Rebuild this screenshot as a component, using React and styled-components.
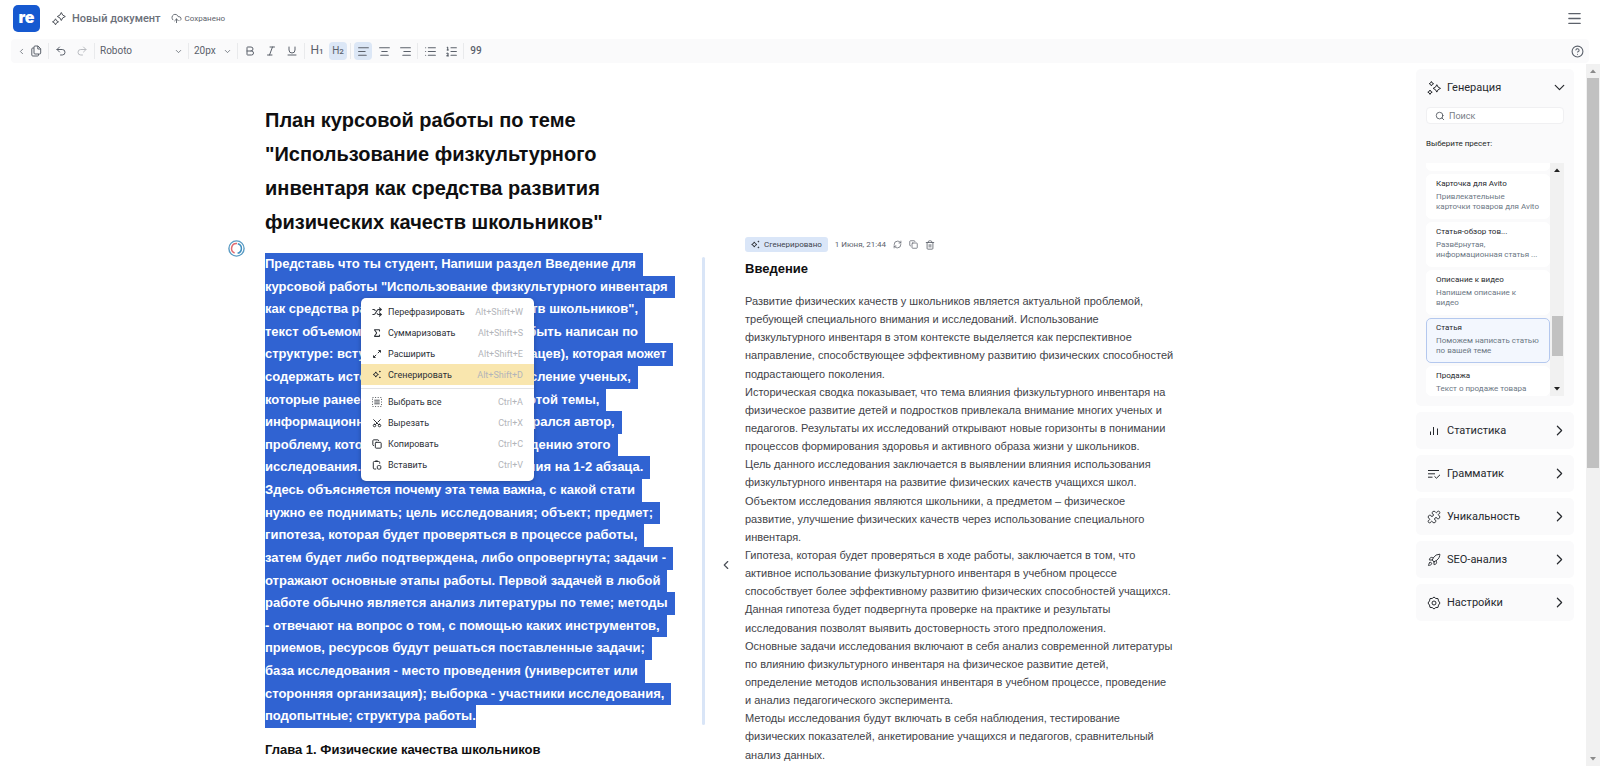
import React from 'react';
import styled, { createGlobalStyle, css } from 'styled-components';
import {
  AlignCenter,
  AlignLeft,
  AlignRight,
  Bold,
  ChevronDown,
  ChevronLeft,
  ChevronRight,
  CircleHelp,
  CloudUpload,
  Copy,
  Italic,
  List,
  ListOrdered,
  Menu,
  Puzzle,
  Redo2,
  RefreshCw,
  Rocket,
  Search,
  Shuffle,
  Scissors,
  Sigma,
  Trash2,
  Underline,
  Undo2,
} from 'lucide-react';

const GlobalStyle = createGlobalStyle`
* {
  box-sizing: border-box;
}
body {
  margin: 0;
  background: #fff;
  color: #1d1f24;
  font-family: Roboto, 'Liberation Sans', sans-serif;
}
button, input, select {
  font: inherit;
  color: inherit;
}
h1, h2, p {
  margin: 0;
}
`;

const Page = styled.div`
  display: flex;
  flex-direction: column;
  height: 100vh;
  overflow: hidden;
`;

const PlainButton = styled.button`
  display: flex;
  align-items: center;
  justify-content: center;
  padding: 0;
  border: 0;
  background: none;
  cursor: pointer;
`;

/* header */

const Header = styled.header`
  display: flex;
  align-items: center;
  flex: none;
  height: 39px;
  padding: 0 17px 2px 13px;
  color: #5d626b;
`;
const Logo = styled.a`
  display: flex;
  align-items: center;
  justify-content: center;
  width: 27px;
  height: 27px;
  margin-right: 12px;
  padding-bottom: 3px;
  border-radius: 5px;
  background: #1659d0;
  color: #fff;
  font: 900 16px/16px Inter, sans-serif;
  text-decoration: none;
`;
const DocTitle = styled.span`
  margin: 0 10px 0 6px;
  font-size: 11px;
  line-height: 16px;
  font-weight: 500;
  color: #6b7079;
`;
const Saved = styled.span`
  display: flex;
  align-items: center;
  gap: 3px;
  font-size: 8px;
  line-height: 12px;
`;
const MenuButton = styled(PlainButton)`
  margin-left: auto;
`;

/* toolbar */

const Toolbar = styled.div`
  display: flex;
  align-items: center;
  flex: none;
  height: 24px;
  margin: 0 11px 1px;
  padding: 0 5px;
  border-radius: 4px;
  background: #fafafb;
  color: #5b616b;
`;
const Tool = styled(PlainButton)`
  width: ${({ $narrow }) => ($narrow ? '11px' : '18px')};
  height: 18px;
  margin-right: ${({ $narrow }) => ($narrow ? '0' : '3px')};
  border-radius: 4px;
  background: ${({ $active }) => ($active ? '#dce7f6' : 'none')};
  opacity: ${({ disabled }) => (disabled ? 0.4 : 1)};
`;
const Heading = styled.span`
  font-size: ${({ $small }) => ($small ? '10px' : '12px')};
  line-height: 14px;

  small {
    font-size: 8px;
    font-weight: 500;
  }
`;
const Quote = styled.span`
  font-size: 10px;
  line-height: 14px;
  font-weight: 500;
`;
const Divider = styled.span`
  width: 1px;
  height: 16px;
  margin-right: 3px;
  background: #e9eaec;
`;
const SelectBox = styled.label`
  display: flex;
  align-items: center;
  width: ${({ $wide }) => ($wide ? '90px' : '45px')};
  padding: 0 5px 0 2px;

  select {
    flex: 1;
    min-width: 0;
    padding: 0;
    border: 0;
    background: none;
    appearance: none;
    font-size: 10px;
    line-height: 14px;
  }
`;
const HelpButton = styled(PlainButton)`
  margin-left: auto;
`;

/* body */

const Body = styled.div`
  display: flex;
  flex: 1;
  min-height: 0;
`;
const Workspace = styled.main`
  display: flex;
  justify-content: center;
  flex: 1;
  min-width: 0;
  overflow: hidden;
`;
const Sheet = styled.article`
  flex: none;
  width: 960px;
  padding-top: 39px;
`;
const Title = styled.h1`
  width: 400px;
  margin-left: 37px;
  font: bold 20px/34px 'Liberation Sans', Arial, sans-serif;
  color: #0f0f10;
`;
const Section = styled.section`
  display: flex;
`;
const Gutter = styled.div`
  flex: none;
  width: 37px;
  padding-top: 1px;
`;
const Source = styled.div`
  flex: none;
  width: 440px;
  padding-top: 14px;
`;
const SourceRow = styled.div`
  position: relative;
  display: flex;
  justify-content: space-between;
`;
const Rule = styled.div`
  flex: none;
  width: 3px;
  height: 468px;
  margin-top: 4px;
  border-radius: 2px;
  background: #d9e5f7;
`;
const Selected = styled.p`
  font: bold 13px/1.74 'Liberation Sans', Arial, sans-serif;
  color: #fff;
`;
const Line = styled.span`
  display: block;
  width: fit-content;
  padding-right: 7px;
  background: #3063d2;
  white-space: nowrap;

  &:last-child {
    padding-right: 0;
  }
`;
const Chapter = styled.h2`
  padding-top: 10px;
  font: bold 13px/24px 'Liberation Sans', Arial, sans-serif;
  color: #0f0f10;
`;
const Collapse = styled(PlainButton)`
  align-self: flex-start;
  width: 16px;
  height: 16px;
  margin: 318px 11px 0 13px;
  color: #4b5058;
`;
const Result = styled.div`
  flex: 1;
  min-width: 0;
`;
const ResultBar = styled.div`
  display: flex;
  align-items: center;
  gap: 7px;
  height: 11px;
  font-size: 8px;
  line-height: 11px;
  color: #5d626b;
`;
const Badge = styled.span`
  display: flex;
  align-items: center;
  gap: 4px;
  padding: 2px 6px;
  border-radius: 3px;
  background: #dae6f8;
  color: #3d434d;
`;
const ResultTitle = styled.h2`
  padding: 7px 0 11px;
  font: bold 13px/24px 'Liberation Sans', Arial, sans-serif;
  color: #0f0f10;
`;
const ResultText = styled.p`
  font: 11px/1.65 'Liberation Sans', Arial, sans-serif;
  color: #3f4349;
  white-space: pre-line;
`;

/* context menu */

const ContextMenu = styled.div`
  position: absolute;
  top: 45px;
  left: 96px;
  width: 173px;
  padding: 3px 0 6px;
  border-radius: 5px;
  background: #fff;
  box-shadow: 0 1px 4px rgba(20, 30, 60, 0.35);
`;
const MenuItem = styled.button`
  display: flex;
  align-items: center;
  gap: 6px;
  width: 100%;
  height: 21px;
  padding: 0 11px;
  border: 0;
  background: ${({ $active }) => ($active ? '#f9e6ae' : 'none')};
  font-size: 9px;
  line-height: 14px;
  color: #2c3036;
  white-space: nowrap;
  cursor: pointer;

  svg {
    width: 10px;
  }
  kbd {
    margin-left: auto;
    font: 9px/14px Roboto, sans-serif;
    color: #b3b5ba;
  }
`;
const MenuRule = styled.div`
  height: 1px;
  margin: 3px 0 2px;
  background: #e1e2e5;
`;

/* sidebar */

const Sidebar = styled.aside`
  flex: none;
  width: 158px;
  margin-right: 12px;
  padding-top: 5px;
`;
const Panel = styled.div`
  margin-bottom: 6px;
  border-radius: 5px;
  background: #fafafb;
`;
const PanelHead = styled.button`
  display: flex;
  align-items: center;
  gap: 6px;
  width: 100%;
  height: 37px;
  padding: 0 6px 0 11px;
  border: 0;
  background: none;
  font-size: 11px;
  line-height: 16px;
  color: #26292e;
  text-align: left;
  cursor: pointer;

  span {
    flex: 1;
  }
`;
const PanelBody = styled.div`
  padding: 1px 10px 10px;
`;
const SearchBox = styled.label`
  display: flex;
  align-items: center;
  gap: 4px;
  height: 17px;
  padding: 0 8px;
  border: 1px solid #f0f0f2;
  border-radius: 4px;
  background: #fff;
  color: #4b5058;

  input {
    flex: 1;
    min-width: 0;
    padding: 0;
    border: 0;
    outline: 0;
    background: none;
    font-size: 9px;
    line-height: 12px;
  }
  input::placeholder {
    color: #777c85;
  }
`;
const Caption = styled.p`
  padding: 14px 0 13px;
  font-size: 8px;
  line-height: 12px;
`;
const PresetArea = styled.div`
  display: flex;
  height: 233px;
`;
const PresetList = styled.div`
  display: flex;
  flex-direction: column;
  justify-content: flex-end;
  gap: 3px;
  flex: 1;
  min-width: 0;
  overflow: hidden;
`;
const Preset = styled.button`
  display: flex;
  flex-direction: column;
  flex: none;
  gap: 3px;
  height: ${({ $cut }) => ($cut ? '30px' : '45px')};
  padding: 4px 0 0 9px;
  border: 1px solid #fff;
  border-radius: 5px;
  background: #fff;
  font-size: 8px;
  line-height: 10px;
  color: #6c7784;
  text-align: left;
  white-space: pre;
  cursor: pointer;

  strong {
    font-weight: 400;
    color: #26292e;
  }

  ${({ $active }) =>
    $active &&
    css`
      border-color: #b4c8ee;
      background: #f3f7fe;
    `}
`;

/* scrollbars */

const Scrollbar = styled.div`
  display: flex;
  flex-direction: column;
  align-items: center;
  flex: none;
  width: 14px;
  background: #f1f1f1;
  color: ${({ $dim }) => ($dim ? '#8b8b8b' : '#222')};
`;
const Arrow = styled.span`
  display: flex;
  align-items: center;
  justify-content: center;
  width: 14px;
  height: 14px;
`;
const Thumb = styled.span`
  width: ${({ $wide }) => ($wide ? '12px' : '11px')};
  height: ${({ $wide }) => ($wide ? '390px' : '40px')};
  margin-top: ${({ $wide }) => ($wide ? '0' : '139px')};
  margin-bottom: auto;
  background: #c1c1c1;
`;

const Star = ({ x, y, r }) => (
  <path d={`M${x} ${y - r}Q${x + r / 5} ${y - r / 5} ${x + r} ${y}Q${x + r / 5} ${y + r / 5} ${x} ${y + r}Q${x - r / 5} ${y + r / 5} ${x - r} ${y}Q${x - r / 5} ${y - r / 5} ${x} ${y - r}Z`} />
);

const TwoStars = () => (
  <svg width="14" height="14" viewBox="0 0 14 14" fill="none" stroke="#4b5058" strokeLinejoin="round">
    <Star x={9.3} y={4.5} r={4} />
    <Star x={3.5} y={9.8} r={3} />
  </svg>
);

const ThreeStars = () => (
  <svg width="14" height="14" viewBox="0 0 14 14" fill="none" stroke="#26292e" strokeLinejoin="round">
    <Star x={9.8} y={7.4} r={3.7} />
    <Star x={4.4} y={2.7} r={2.2} />
    <Star x={3} y={11.2} r={2.2} />
  </svg>
);

const Spark = () => (
  <svg width="9" height="9" viewBox="0 0 9 9" fill="none" stroke="#26292e" strokeLinejoin="round">
    <Star x={3.3} y={4.5} r={2.6} />
    <circle cx="7.4" cy="1.6" r="0.4" fill="#26292e" />
    <circle cx="7.4" cy="7.4" r="0.4" fill="#26292e" />
  </svg>
);

const Pages = () => (
  <svg width="12" height="12" viewBox="0 0 12 12" fill="none" stroke="currentColor" strokeLinejoin="round">
    <path d="M5 1H8L10.7 3.7V8Q10.7 9 9.7 9H5Q4 9 4 8V2Q4 1 5 1Z" />
    <path d="M7.8 1V4H10.7M4 3H2.8Q1.8 3 1.8 4V10Q1.8 11 2.8 11H7.5Q8.5 11 8.5 10V9" />
  </svg>
);

const Expand = () => (
  <svg width="10" height="10" viewBox="0 0 10 10" fill="none" stroke="currentColor">
    <path d="M1.5 6.4V8.5H3.6M1.7 8.3L4.2 5.8M5.8 4.2L8.3 1.7M6.4 1.5H8.5V3.6" />
  </svg>
);

const SelectAll = () => (
  <svg width="10" height="10" viewBox="0 0 10 10" fill="none" stroke="currentColor" strokeWidth="0.8">
    <path d="M.5 .5H9.5V9.5H.5Z" strokeDasharray="1 1.6" />
    <path d="M2.3 3.2H7.7M2.3 5H7.7M2.3 6.8H7.7" />
  </svg>
);

const Paste = () => (
  <svg width="10" height="10" viewBox="0 0 10 10" fill="none" stroke="currentColor" strokeLinejoin="round">
    <path d="M4.2 9H2.2Q1.3 9 1.3 8V2.5Q1.3 1.5 2.3 1.5H6.7Q7.7 1.5 7.7 2.5V3.7" />
    <path d="M3.3 .9H5.7" />
    <rect x="5.3" y="5.6" width="3.5" height="3.5" rx="1" />
  </svg>
);

const Bars = () => (
  <svg width="14" height="14" viewBox="0 0 14 14" fill="none" stroke="currentColor">
    <path d="M3.5 7.5V11M6.5 3V11M10.5 4.5V11" />
  </svg>
);

const Grammar = () => (
  <svg width="14" height="14" viewBox="0 0 14 14" fill="none" stroke="currentColor">
    <path d="M1 3.5H12M1 6.8H8M1 10.2H5.5M7.5 9.4L9.5 11.2L13 7.8" />
  </svg>
);

const Gear = () => (
  <svg width="14" height="14" viewBox="0 0 14 14" fill="none" stroke="currentColor" strokeLinejoin="round">
    <path d="M7 1L8.7 2.4L11 2.6L11.5 4.9L13 7L11.5 9.1L11 11.4L8.7 11.6L7 13L5.3 11.6L3 11.4L2.5 9.1L1 7L2.5 4.9L3 2.6L5.3 2.4Z" />
    <circle cx="7" cy="7" r="2" />
  </svg>
);

const Ring = () => (
  <svg width="17" height="17" viewBox="0 0 17 17" fill="none">
    <circle cx="8.5" cy="8.5" r="7.6" stroke="#5b9cc4" strokeWidth="1.4" />
    <path d="M9.8 3.8A4.9 4.9 0 0 1 9.6 13.3" stroke="#3f8fc0" strokeWidth="1.5" />
    <path d="M9 3.6A4.9 4.9 0 0 0 6.6 13" stroke="#e06a6f" strokeWidth="1.5" />
  </svg>
);

const UpArrow = () => (
  <Arrow>
    <svg width="6" height="4" viewBox="0 0 6 4" fill="currentColor"><path d="M0 4L3 0.5L6 4Z" /></svg>
  </Arrow>
);

const DownArrow = () => (
  <Arrow>
    <svg width="6" height="4" viewBox="0 0 6 4" fill="currentColor"><path d="M0 0L3 3.5L6 0Z" /></svg>
  </Arrow>
);

const selectedLines = [
  'Представь что ты студент, Напиши раздел Введение для',
  'курсовой работы "Использование физкультурного инвентаря',
  'как средства развития физических качеств школьников",',
  'текст объемом 500-600 слов. Он должен быть написан по',
  'структуре: вступление (на несколько абзацев), которая может',
  'содержать историческую сводку, перечисление ученых,',
  'которые ранее рассматривали вопросы этой темы,',
  'информационный базис, на который опирался автор,',
  'проблему, которая подталкивает к проведению этого',
  'исследования. Актуальность исследования на 1-2 абзаца.',
  'Здесь объясняется почему эта тема важна, с какой стати',
  'нужно ее поднимать; цель исследования; объект; предмет;',
  'гипотеза, которая будет проверяться в процессе работы,',
  'затем будет либо подтверждена, либо опровергнута; задачи -',
  'отражают основные этапы работы. Первой задачей в любой',
  'работе обычно является анализ литературы по теме; методы',
  '- отвечают на вопрос о том, с помощью каких инструментов,',
  'приемов, ресурсов будут решаться поставленные задачи;',
  'база исследования - место проведения (университет или',
  'сторонняя организация); выборка - участники исследования,',
  'подопытные; структура работы.',
];

const resultText = `Развитие физических качеств у школьников является актуальной проблемой,
требующей специального внимания и исследований. Использование
физкультурного инвентаря в этом контексте выделяется как перспективное
направление, способствующее эффективному развитию физических способностей
подрастающего поколения.
Историческая сводка показывает, что тема влияния физкультурного инвентаря на
физическое развитие детей и подростков привлекала внимание многих ученых и
педагогов. Результаты их исследований открывают новые горизонты в понимании
процессов формирования здоровья и активного образа жизни у школьников.
Цель данного исследования заключается в выявлении влияния использования
физкультурного инвентаря на развитие физических качеств учащихся школ.
Объектом исследования являются школьники, а предметом – физическое
развитие, улучшение физических качеств через использование специального
инвентаря.
Гипотеза, которая будет проверяться в ходе работы, заключается в том, что
активное использование физкультурного инвентаря в учебном процессе
способствует более эффективному развитию физических способностей учащихся.
Данная гипотеза будет подвергнута проверке на практике и результаты
исследования позволят выявить достоверность этого предположения.
Основные задачи исследования включают в себя анализ современной литературы
по влиянию физкультурного инвентаря на физическое развитие детей,
определение методов использования инвентаря в учебном процессе, проведение
и анализ педагогического эксперимента.
Методы исследования будут включать в себя наблюдения, тестирование
физических показателей, анкетирование учащихся и педагогов, сравнительный
анализ данных.`;

const aiActions = [
  { label: 'Перефразировать', keys: 'Alt+Shift+W', icon: <Shuffle size={10} strokeWidth={2.6} /> },
  { label: 'Суммаризовать', keys: 'Alt+Shift+S', icon: <Sigma size={10} strokeWidth={2.6} /> },
  { label: 'Расширить', keys: 'Alt+Shift+E', icon: <Expand /> },
  { label: 'Сгенерировать', keys: 'Alt+Shift+D', icon: <Spark />, active: true },
];

const editActions = [
  { label: 'Выбрать все', keys: 'Ctrl+A', icon: <SelectAll /> },
  { label: 'Вырезать', keys: 'Ctrl+X', icon: <Scissors size={10} strokeWidth={2.4} transform="rotate(-90)" /> },
  { label: 'Копировать', keys: 'Ctrl+C', icon: <Copy size={10} strokeWidth={2.4} /> },
  { label: 'Вставить', keys: 'Ctrl+V', icon: <Paste /> },
];

const presets = [
  { name: 'Карточка для Avito', text: 'Привлекательные\nкарточки товаров для Avito' },
  { name: 'Статья-обзор тов...', text: 'Развёрнутая,\nинформационная статья ...' },
  { name: 'Описание к видео', text: 'Напишем описание к\nвидео' },
  { name: 'Статья', text: 'Поможем написать статью\nпо вашей теме', active: true },
  { name: 'Продажа', text: 'Текст о продаже товара', cut: true },
];

const panels = [
  { label: 'Статистика', icon: <Bars /> },
  { label: 'Грамматик', icon: <Grammar /> },
  { label: 'Уникальность', icon: <Puzzle size={14} strokeWidth={1.6} /> },
  { label: 'SEO-анализ', icon: <Rocket size={14} strokeWidth={1.6} /> },
  { label: 'Настройки', icon: <Gear /> },
];

const renderActions = (items) =>
  items.map(({ label, keys, icon, active }) => (
    <MenuItem key={label} role="menuitem" $active={active}>
      {icon}
      {label}
      <kbd>{keys}</kbd>
    </MenuItem>
  ));

const EditorToolbar = () => (
  <Toolbar role="toolbar">
    <Tool $narrow aria-label="Назад"><ChevronLeft size={9} /></Tool>
    <Tool aria-label="Файлы"><Pages /></Tool>
    <Divider />
    <Tool aria-label="Отменить"><Undo2 size={12} /></Tool>
    <Tool aria-label="Повторить" disabled><Redo2 size={12} /></Tool>
    <Divider />
    <SelectBox $wide>
      <select aria-label="Шрифт"><option>Roboto</option></select>
      <ChevronDown size={9} />
    </SelectBox>
    <Divider />
    <SelectBox>
      <select aria-label="Размер"><option>20px</option></select>
      <ChevronDown size={9} />
    </SelectBox>
    <Divider />
    <Tool aria-label="Жирный"><Bold size={12} /></Tool>
    <Tool aria-label="Курсив"><Italic size={12} /></Tool>
    <Tool aria-label="Подчёркнутый"><Underline size={12} /></Tool>
    <Divider />
    <Tool><Heading>H<small>1</small></Heading></Tool>
    <Tool $active><Heading $small>H<small>2</small></Heading></Tool>
    <Divider />
    <Tool $active aria-label="По левому краю"><AlignLeft size={13} /></Tool>
    <Tool aria-label="По центру"><AlignCenter size={13} /></Tool>
    <Tool aria-label="По правому краю"><AlignRight size={13} /></Tool>
    <Divider />
    <Tool aria-label="Список"><List size={13} /></Tool>
    <Tool aria-label="Нумерованный список"><ListOrdered size={13} /></Tool>
    <Divider />
    <Tool aria-label="Цитата"><Quote>99</Quote></Tool>
    <HelpButton aria-label="Помощь"><CircleHelp size={13} /></HelpButton>
  </Toolbar>
);

const Generation = () => (
  <Panel>
    <PanelHead>
      <ThreeStars />
      <span>Генерация</span>
      <ChevronDown size={17} strokeWidth={1.7} />
    </PanelHead>
    <PanelBody>
      <SearchBox>
        <Search size={10} />
        <input type="search" placeholder="Поиск" aria-label="Поиск" />
      </SearchBox>
      <Caption>Выберите пресет:</Caption>
      <PresetArea>
        <PresetList>
          {/* the card that is almost scrolled out of view */}
          <Preset aria-hidden="true" tabIndex={-1} />
          {presets.map(({ name, text, active, cut }) => (
            <Preset key={name} $active={active} $cut={cut}>
              <strong>{name}</strong>
              {text}
            </Preset>
          ))}
        </PresetList>
        <Scrollbar>
          <UpArrow />
          <Thumb />
          <DownArrow />
        </Scrollbar>
      </PresetArea>
    </PanelBody>
  </Panel>
);

const App = () => (
  <>
    <GlobalStyle />
    <Page>
      <Header>
        <Logo href="#">re</Logo>
        <TwoStars />
        <DocTitle>Новый документ</DocTitle>
        <Saved><CloudUpload size={11} />Сохранено</Saved>
        <MenuButton aria-label="Меню"><Menu size={17} strokeWidth={1.8} /></MenuButton>
      </Header>
      <EditorToolbar />
      <Body>
        <Workspace>
          <Sheet>
            <Title>План курсовой работы по теме "Использование физкультурного инвентаря как средства развития физических качеств школьников"</Title>
            <Section>
              <Gutter><Ring /></Gutter>
              <Source>
                <SourceRow>
                  <Selected>
                    {selectedLines.map((line) => <Line key={line}>{line}</Line>)}
                  </Selected>
                  <Rule />
                  <ContextMenu role="menu">
                    {renderActions(aiActions)}
                    <MenuRule />
                    {renderActions(editActions)}
                  </ContextMenu>
                </SourceRow>
                <Chapter>Глава 1. Физические качества школьников</Chapter>
              </Source>
              <Collapse aria-label="Свернуть"><ChevronLeft size={14} /></Collapse>
              <Result>
                <ResultBar>
                  <Badge><Spark />Сгенерировано</Badge>
                  1 Июня, 21:44
                  <PlainButton aria-label="Обновить"><RefreshCw size={9} /></PlainButton>
                  <PlainButton aria-label="Копировать"><Copy size={9} /></PlainButton>
                  <PlainButton aria-label="Удалить"><Trash2 size={10} /></PlainButton>
                </ResultBar>
                <ResultTitle>Введение</ResultTitle>
                <ResultText>{resultText}</ResultText>
              </Result>
            </Section>
          </Sheet>
        </Workspace>
        <Sidebar>
          <Generation />
          {panels.map(({ label, icon }) => (
            <Panel key={label}>
              <PanelHead>
                {icon}
                <span>{label}</span>
                <ChevronRight size={17} strokeWidth={1.7} />
              </PanelHead>
            </Panel>
          ))}
        </Sidebar>
        <Scrollbar $dim>
          <UpArrow />
          <Thumb $wide />
          <DownArrow />
        </Scrollbar>
      </Body>
    </Page>
  </>
);

export default App;
